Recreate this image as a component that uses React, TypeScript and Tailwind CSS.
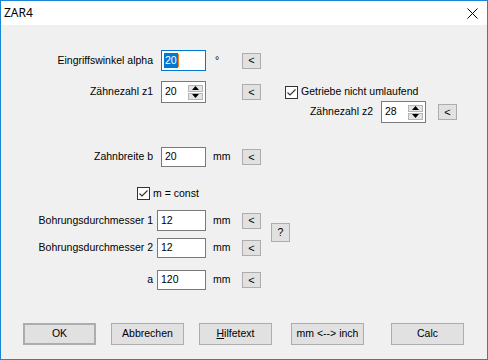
import React from "react";

function SmallBtn({ label = "<", cls = "" }: { label?: string; cls?: string }) {
  return (
    <div
      className={
        "w-[19px] h-[16px] bg-[#e1e1e1] border border-[#adadad] flex items-center justify-center text-[11px] leading-none " +
        cls
      }
    >
      {label}
    </div>
  );
}

function CheckBox() {
  return (
    <div className="w-[13px] h-[13px] bg-white border border-[#333333] flex items-center justify-center shrink-0">
      <svg width="11" height="11" viewBox="0 0 11 11">
        <polyline points="1.5,5.5 4,8 9.5,2.5" fill="none" stroke="#333333" strokeWidth="1.2" />
      </svg>
    </div>
  );
}

function Spin({ value, h = "h-[22px]" }: { value: string; h?: string }) {
  return (
    <div className={"w-[45px] " + h + " bg-white border border-[#7a7a7a] flex items-center pl-[3px] pr-[2px]"}>
      <span className="flex-1">{value}</span>
      <div className="flex flex-col gap-[1px]">
        <div className="w-[15px] h-[7px] bg-[#e5e5e5] border border-[#b5b5b5] flex items-center justify-center">
          <svg width="7" height="4" viewBox="0 0 7 4">
            <polygon points="0,4 7,4 3.5,0" fill="#000" />
          </svg>
        </div>
        <div className="w-[15px] h-[7px] bg-[#e5e5e5] border border-[#b5b5b5] flex items-center justify-center">
          <svg width="7" height="4" viewBox="0 0 7 4">
            <polygon points="0,0 7,0 3.5,4" fill="#000" />
          </svg>
        </div>
      </div>
    </div>
  );
}

function TextBox({ value, w = "w-[45px]", h = "h-[20px]" }: { value: string; w?: string; h?: string }) {
  return (
    <div className={w + " " + h + " bg-white border border-[#7a7a7a] flex items-center pl-[3px]"}>
      {value}
    </div>
  );
}

function Btn({ children, cls = "" }: { children: React.ReactNode; cls?: string }) {
  return (
    <div
      className={
        "w-[73px] h-[22px] bg-[#e1e1e1] border border-[#adadad] flex items-center justify-center " + cls
      }
    >
      {children}
    </div>
  );
}

export default function App() {
  return (
    <div className="w-[488px] h-[360px] border border-[#1a85d6] bg-[#f0f0f0] flex flex-col text-black text-[10.5px] font-['Liberation_Sans',Arial,sans-serif]">
      {/* Title bar */}
      <div className="h-[24px] bg-white flex items-center justify-between pl-[3px] pr-[9px] shrink-0">
        <span className="text-[12px] font-['Noto_Sans','Open_Sans',sans-serif] leading-none">ZAR4</span>
        <svg width="11" height="11" viewBox="0 0 11 11">
          <line x1="0.5" y1="0.5" x2="10.5" y2="10.5" stroke="#000" strokeWidth="1" />
          <line x1="10.5" y1="0.5" x2="0.5" y2="10.5" stroke="#000" strokeWidth="1" />
        </svg>
      </div>

      {/* Row 1 */}
      <div className="mt-[25px] flex items-center h-[21px]">
        <div className="w-[152px] text-right">Eingriffswinkel alpha</div>
        <div className="ml-[8px] w-[45px] h-[21px] bg-white border border-[#0078d7] flex items-center pl-[2px]">
          <span className="bg-[#0078d7] text-white px-[1px]">20</span>
          <span className="w-[1px] h-[13px] bg-[#f08020]"></span>
        </div>
        <div className="w-[36px] pl-[9px]">°</div>
        <SmallBtn />
      </div>

      {/* Row 2 with right column */}
      <div className="mt-[10px] flex items-start">
        <div className="flex items-center h-[22px]">
          <div className="w-[152px] text-right">Zähnezahl z1</div>
          <div className="ml-[8px]">
            <Spin value="20" />
          </div>
          <div className="w-[36px]"></div>
          <SmallBtn />
        </div>
        <div className="ml-[24px] flex flex-col">
          <div className="h-[22px] flex items-center">
            <CheckBox />
            <span className="ml-[3px]">Getriebe nicht umlaufend</span>
          </div>
          <div className="-mt-[2px] h-[22px] flex items-center">
            <div className="w-[88px] text-right">Zähnezahl z2</div>
            <div className="ml-[8px]">
              <Spin value="28" />
            </div>
            <SmallBtn cls="ml-[12px]" />
          </div>
        </div>
      </div>

      {/* Row 4 */}
      <div className="mt-[24px] flex items-center h-[20px]">
        <div className="w-[152px] text-right">Zahnbreite b</div>
        <div className="ml-[8px]">
          <TextBox value="20" />
        </div>
        <div className="w-[36px] pl-[7px]">mm</div>
        <SmallBtn />
      </div>

      {/* Row 5 */}
      <div className="mt-[20px] h-[13px] flex items-center pl-[136px]">
        <CheckBox />
        <span className="ml-[3px]">m = const</span>
      </div>

      {/* Rows 6-7 */}
      <div className="mt-[10px] flex items-start">
        <div className="flex flex-col">
          <div className="flex items-center h-[21px]">
            <div className="w-[152px] text-right">Bohrungsdurchmesser 1</div>
            <div className="ml-[4px]">
              <TextBox value="12" w="w-[49px]" h="h-[21px]" />
            </div>
            <div className="w-[36px] pl-[7px]">mm</div>
            <SmallBtn />
          </div>
          <div className="mt-[7px] flex items-center h-[20px]">
            <div className="w-[152px] text-right">Bohrungsdurchmesser 2</div>
            <div className="ml-[4px]">
              <TextBox value="12" w="w-[49px]" />
            </div>
            <div className="w-[36px] pl-[7px]">mm</div>
            <SmallBtn />
          </div>
        </div>
        <div className="ml-[10px] mt-[13px] w-[19px] h-[19px] bg-[#e1e1e1] border border-[#adadad] flex items-center justify-center">
          ?
        </div>
      </div>

      {/* Row 8 */}
      <div className="mt-[12px] flex items-center h-[20px]">
        <div className="w-[152px] text-right">a</div>
        <div className="ml-[4px]">
          <TextBox value="120" w="w-[49px]" />
        </div>
        <div className="w-[36px] pl-[7px]">mm</div>
        <SmallBtn />
      </div>

      {/* Buttons */}
      <div className="mt-[33px] flex h-[22px] pl-[22px]">
        <Btn cls="w-[72px] border-2 border-[#0078d7]">OK</Btn>
        <Btn cls="ml-[15px]">Abbrechen</Btn>
        <Btn cls="ml-[15px]">
          <span>
            <span className="underline">H</span>ilfetext
          </span>
        </Btn>
        <Btn cls="ml-[19px]">mm &lt;--&gt; inch</Btn>
        <Btn cls="ml-[27px]">Calc</Btn>
      </div>
    </div>
  );
}
